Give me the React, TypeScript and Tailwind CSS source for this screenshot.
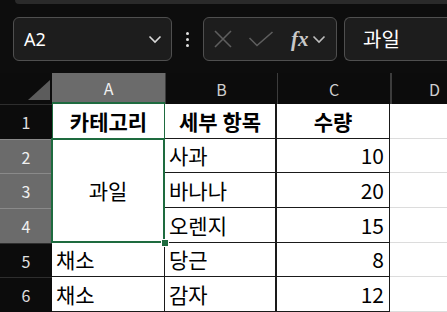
import React from 'react';

const FONT = { fontFamily: '"Noto Sans CJK KR", "Noto Sans", sans-serif' };

const ColHead = ({ label, selected }: { label: string; selected?: boolean }) => (
    <div
        className={
            selected
                ? "flex items-center justify-center bg-[#6b6b6b] text-[#f0f0f0] text-[16px] border-b-2 border-[#1e6b3f]"
                : "flex items-center justify-center bg-[#0c0c0c] text-[#cfcfcf] text-[16px] border-l border-[#3c3c3c]"
        }
    >
        {label}
    </div>
);

const RowHead = ({ n, selected }: { n: number; selected?: boolean }) => (
    <div
        className={
            selected
                ? "flex items-center justify-center bg-[#6b6b6b] text-[#f0f0f0] text-[16px] border-t border-[#8a8a8a]"
                : "flex items-center justify-center bg-[#0c0c0c] text-[#e0e0e0] text-[16px] border-t border-[#2e2e2e]"
        }
    >
        {n}
    </div>
);

const Cell = ({ children, align = "left", bold, className = "" }: any) => (
    <div
        className={
            "flex items-center bg-white text-black text-[21px] leading-none border-b border-r border-[#1a1a1a] overflow-hidden whitespace-nowrap " +
            (align === "center" ? "justify-center " : align === "right" ? "justify-end pr-[5px] " : "pl-[4px] ") +
            (bold ? "font-bold " : "") +
            className
        }
    >
        {children}
    </div>
);

const DCell = () => <div className="bg-white border-b border-[#dcdcdc]"></div>;

const Chevron = ({ className = "" }: { className?: string }) => (
    <svg width="14" height="9" viewBox="0 0 14 9" className={className}>
        <path d="M1.5 1.5 L7 7 L12.5 1.5" stroke="currentColor" strokeWidth="1.6" fill="none" />
    </svg>
);

export default function App() {
    return (
        <div className="w-[447px] h-[312px] bg-[#0d0d0d] overflow-hidden flex flex-col" style={FONT}>
            <div className="h-[4px] flex">
                <div className="w-[15px]"></div>
                <div className="flex-1 bg-[#2a2a2a] rounded-bl-[5px]"></div>
            </div>

            <div className="flex items-center h-[44px] mt-[13px] pl-[13px]">
                <div className="w-[159px] h-full flex items-center justify-between rounded-[6px] border border-[#4f4f4f] bg-[#1d1d1d] pl-[10px] pr-[9px]">
                    <span className="text-white text-[18px]" style={{ fontFamily: '"Noto Sans", sans-serif' }}>A2</span>
                    <Chevron className="text-[#d8d8d8]" />
                </div>
                <div className="w-[31px] flex flex-col items-center gap-[3px]">
                    <span className="w-[3px] h-[3px] bg-[#e0e0e0] rounded-full"></span>
                    <span className="w-[3px] h-[3px] bg-[#e0e0e0] rounded-full"></span>
                    <span className="w-[3px] h-[3px] bg-[#e0e0e0] rounded-full"></span>
                </div>
                <div className="w-[134px] h-full flex items-center rounded-[6px] border border-[#4f4f4f] bg-[#1d1d1d] pl-[9px]">
                    <svg width="20" height="20" viewBox="0 0 20 20">
                        <path d="M2 2 L18 18 M18 2 L2 18" stroke="#5e5e5e" strokeWidth="1.6" fill="none" />
                    </svg>
                    <svg width="26" height="18" viewBox="0 0 26 18" className="ml-[15px]">
                        <path d="M1.5 8 L9 15.5 L24.5 2" stroke="#5e5e5e" strokeWidth="1.6" fill="none" />
                    </svg>
                    <span
                        className="ml-[17px] text-[#c8c8c8] text-[21px] italic font-bold leading-none"
                        style={{ fontFamily: '"Liberation Serif", serif' }}
                    >
                        fx
                    </span>
                    <Chevron className="ml-[3px] text-[#bdbdbd]" />
                </div>
                <div className="flex-1 h-full ml-[7px] flex items-center rounded-l-[6px] border border-r-0 border-[#4f4f4f] bg-[#1d1d1d] pl-[18px]">
                    <span className="text-white text-[20px]">과일</span>
                </div>
            </div>

            <div
                className="mt-[12px] grid grid-cols-[52px_113px_112px_113px_1fr] grid-rows-[31px_35px_34px_35px_35px_34px_35px]"
            >
                <div className="bg-[#0c0c0c] flex items-end justify-end pr-[2px] pb-[4px]">
                    <svg width="22" height="20" viewBox="0 0 22 20">
                        <path d="M22 0 L22 20 L0 20 Z" fill="#5c5c5c" />
                    </svg>
                </div>
                <ColHead label="A" selected />
                <ColHead label="B" />
                <ColHead label="C" />
                <div className="flex items-center bg-[#0c0c0c] text-[#cfcfcf] text-[16px] border-l-2 border-[#3c3c3c] pl-[37px]">D</div>

                <RowHead n={1} />
                <Cell align="center" bold className="border-l border-l-[#1e6b3f] border-r-[#1e6b3f]">카테고리</Cell>
                <Cell align="center" bold className="border-r-2">세부 항목</Cell>
                <Cell align="center" bold>수량</Cell>
                <DCell />

                <RowHead n={2} selected />
                <div className="relative row-span-3 bg-white border-b border-r border-[#1a1a1a] flex items-center justify-center text-black text-[21px]">
                    과일
                    <div className="absolute left-[-1px] top-[-1px] right-[-1px] bottom-[-1px] border-2 border-[#1e6b3f]"></div>
                    <div className="absolute right-[-5px] bottom-[-5px] w-[8px] h-[8px] bg-[#1e6b3f] border border-white"></div>
                </div>
                <Cell className="border-r-2">사과</Cell>
                <Cell align="right">10</Cell>
                <DCell />

                <RowHead n={3} selected />
                <Cell className="border-r-2">바나나</Cell>
                <Cell align="right">20</Cell>
                <DCell />

                <RowHead n={4} selected />
                <Cell className="border-r-2">오렌지</Cell>
                <Cell align="right">15</Cell>
                <DCell />

                <RowHead n={5} />
                <Cell>채소</Cell>
                <Cell className="border-r-2">당근</Cell>
                <Cell align="right">8</Cell>
                <DCell />

                <RowHead n={6} />
                <Cell>채소</Cell>
                <Cell className="border-r-2">감자</Cell>
                <Cell align="right">12</Cell>
                <DCell />
            </div>
        </div>
    );
}
